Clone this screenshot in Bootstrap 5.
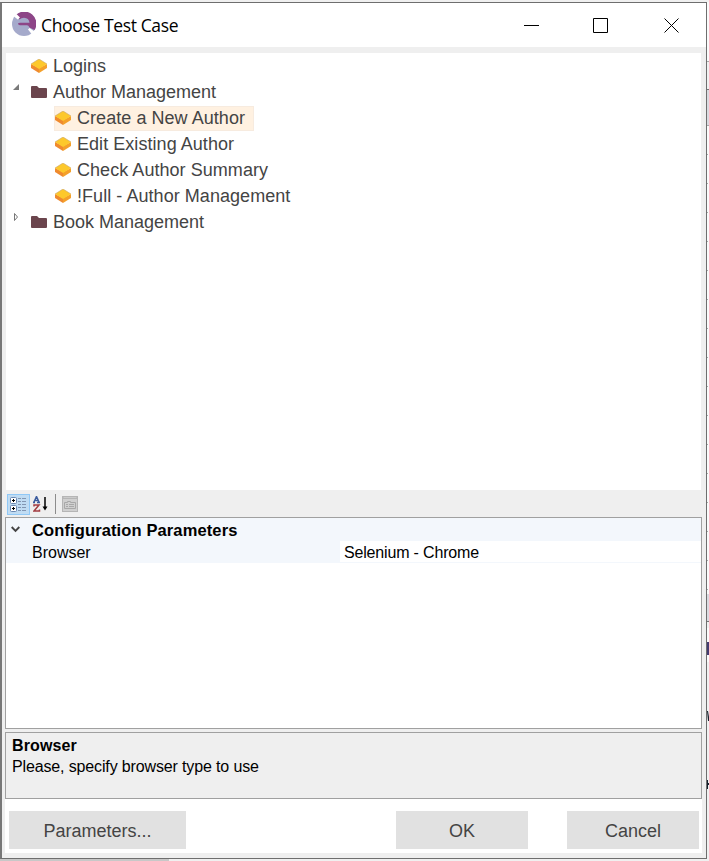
<!DOCTYPE html>
<html lang="en">
<head>
<meta charset="utf-8">
<meta name="viewport" content="width=device-width, initial-scale=1">
<title>Choose Test Case</title>
<link href="https://cdn.jsdelivr.net/npm/bootstrap@5.3.0/dist/css/bootstrap.min.css" rel="stylesheet">
<style>
body{width:709px;height:861px;overflow:hidden;background:#f0f0f0;font-family:"Liberation Sans",Arial,sans-serif;color:#000;line-height:1.2}
svg{display:block;flex:none}
.desktop{height:861px;padding-top:2px;background:linear-gradient(#c8c8c8,#c8c8c8) 0 859px/169px 2px no-repeat,#f0f0f0}
.dialog-window{width:707px;height:857px;border:1px solid #6e6e6e;border-left:2px solid #777;background:#efefef}
.edge{width:2px;height:859px}
.titlebar{height:44px;padding-left:10px;background:#fff}
.titlebar h1{font:400 17.5px/24px "Open Sans","Noto Sans",sans-serif;margin:0 0 1px 5px;letter-spacing:-.37px}
.logo{margin-top:-3px}
.tree{margin:6px 5px 0 4px;height:437px;background:#fff;color:#444}
.tree-row{height:26px;padding-left:25px;font-size:18px;white-space:nowrap}
.tree-row.parent{padding-left:6px}
.tree-row.child{padding-left:49px;letter-spacing:.05px}
.node{height:25px;line-height:25px;padding-right:8px;border:1px solid transparent;margin-left:-1px;display:flex;align-items:center}
.node svg{margin-right:6px}
.node.selected{background:#fff1e1;border-color:#f7ebdf}
.toolstrip{height:27px;padding:1px 0 0 5px}
.tool-on{width:23px;height:21px;background:#c0dcf3;border:1px solid #90c8f6;padding:1px}
.sep{width:1px;height:20px;background:#8c8c8c;margin-left:7px}
.sort-icon{margin-left:3px}
.page-icon{margin-left:6px}
.props{margin:0 4px 0 3px;height:212px;border:1px solid #a0a0a0;background:#fff;font-size:16px}
.prop-head{height:23px;background:#f3f7fc;padding:2px 0 0 5px}
.prop-head b{margin-left:12px;font-size:16.5px;letter-spacing:.12px}
.prop-head svg{margin-top:-3px}
.prop-row{height:22px;background:#f3f7fc;line-height:23px}
.prop-name{width:334px;padding-left:26px}
.prop-value{background:#fff;height:21px;padding-left:4px;flex:1;letter-spacing:-.17px}
.help{margin:3px 4px 0 3px;height:67px;border:1px solid #a0a0a0;padding:2px 6px;font-size:16px;line-height:21px;letter-spacing:-.14px}
.help b{letter-spacing:.12px}
.footer-bar{margin:0 4px 0 3px;height:54px;background:#fff;padding:12px 3px 0 4px}
.dbtn{height:38px;background:#e1e1e1;border:0;border-radius:0;color:#444;font-size:18px;padding:1px 0 0;width:132px;line-height:39px}
.dbtn.wide{width:177px}
.gap-ok{margin-left:210px}.gap-cancel{margin-left:39px}
</style>
</head>
<body>
<svg width="0" height="0" class="position-absolute">
<symbol id="case" viewBox="0 0 16 14"><path d="M0 5v4l8 5V9z" fill="#ef8a2f"/><path d="M16 5v4l-8 5V9z" fill="#f4a02a"/><path d="M8 0l8 5-8 5-8-5z" fill="#fdc82b"/><path d="M0 5l8-5 8 5" fill="none" stroke="#c9a66e" stroke-width=".6"/></symbol>
<symbol id="folder" viewBox="0 0 16 12"><path d="M0 1q0-1 1-1h5l2 2h7q1 0 1 1v8q0 1-1 1H1q-1 0-1-1z" fill="#6b454d"/></symbol>
</svg>
<div class="desktop d-flex">
<main class="dialog-window d-flex flex-column">
<header class="titlebar d-flex align-items-center">
<svg class="logo" width="24" height="24" viewBox="0 0 24 24"><circle cx="12" cy="12" r="12" fill="#a5aacb"/><path d="M4.500 2.500A12 12 0 0 1 22.500 18L17.500 15.500Q16.500 13.200 15 13.200H8Q6 13 6 11.200 6 10.800 8 10.800H17.500Q17 6 12 5.800 9 5.800 7.500 7.500z" fill="#8d4587"/><path d="M2 4.500L4.500 2 8 5.500 5.800 7.500zM16 17.500L17.500 16 22.500 19.500 20 22.500z" fill="#fff"/></svg>
<h1>Choose Test Case</h1>
<svg class="ms-auto" width="184" height="20" viewBox="0 1 184 20" fill="none" stroke="#000"><path d="M2 11.500h15M71.500 4.500h14v14h-14z"/><path d="M142.500 4.500l14 14m0-14l-14 14"/></svg>
</header>
<section class="tree">
<div class="tree-row d-flex align-items-center"><div class="node"><svg width="16" height="14"><use href="#case"/></svg><span>Logins</span></div></div>
<div class="tree-row parent d-flex align-items-center"><svg width="19" height="18"><path d="M7 1v6H1z" fill="#7a7a7a"/></svg><div class="node"><svg width="16" height="12"><use href="#folder"/></svg><span>Author Management</span></div></div>
<div class="tree-row child d-flex align-items-center"><div class="node selected"><svg width="16" height="14"><use href="#case"/></svg><span>Create a New Author</span></div></div>
<div class="tree-row child d-flex align-items-center"><div class="node"><svg width="16" height="14"><use href="#case"/></svg><span>Edit Existing Author</span></div></div>
<div class="tree-row child d-flex align-items-center"><div class="node"><svg width="16" height="14"><use href="#case"/></svg><span>Check Author Summary</span></div></div>
<div class="tree-row child d-flex align-items-center"><div class="node"><svg width="16" height="14"><use href="#case"/></svg><span>!Full - Author Management</span></div></div>
<div class="tree-row parent d-flex align-items-center"><svg width="19" height="18"><path d="M2.500 .5v7l3-3.500z" fill="none" stroke="#777"/></svg><div class="node"><svg width="16" height="12"><use href="#folder"/></svg><span>Book Management</span></div></div>
</section>
<div class="toolstrip d-flex align-items-center">
<div class="tool-on"><svg width="19" height="17" viewBox="0 0 19 17"><g fill="#fff" stroke="#6a87b0"><rect x="1.500" y="1.500" width="6" height="6" rx="1"/><rect x="1.500" y="9.500" width="6" height="6" rx="1"/></g><path d="M3 4.500h3M4.500 3v3M3 12.500h3M4.500 11v3" stroke="#000"/><path d="M9 2.500h3m1 0h4M9 5.500h3m1 0h4M9 8.500h3m1 0h4M9 11.500h3m1 0h4M9 14.500h3m1 0h4" stroke="#8296b2"/></svg></div>
<svg class="sort-icon" width="15" height="16" viewBox="0 0 15 16" fill="none" stroke-width="1.500"><path d="M0 6.500h2M4 6.500h3M1 6l2.500-5.500L6 6M2 4.500h3" stroke="#3c5c9e"/><path d="M1 10.500V9h5L1 15h5.500v-1.500" stroke="#a33d42"/><path d="M12 1v12" stroke="#000"/><path d="M9.500 10.500h5l-2.500 4z" fill="#000"/></svg>
<span class="sep"></span>
<svg class="page-icon" width="16" height="16" viewBox="0 0 16 16"><path d="M0 0h16v16H0z" fill="#b5b5b5"/><path d="M1 3h14v12H1z" fill="#d0d0d0"/><path d="M1.500 1.500h13" stroke="#cbcbcb"/><path d="M2.500 6.500h3v-1h3v1h5v6h-11zM4 8.500h2m1 0h5M4 10.500h2m1 0h5" stroke="#a8a8a8" fill="none"/></svg>
</div>
<section class="props">
<div class="prop-head d-flex align-items-center"><svg width="9" height="7" viewBox="0 0 9 7"><path d="M.7 1l3.800 3.800L8.300 1" fill="none" stroke="#444" stroke-width="1.900"/></svg><b>Configuration Parameters</b></div>
<div class="prop-row d-flex"><span class="prop-name">Browser</span><span class="prop-value">Selenium - Chrome</span></div>
</section>
<section class="help"><b>Browser</b><div>Please, specify browser type to use</div></section>
<footer class="footer-bar d-flex"><button class="btn dbtn wide">Parameters...</button><button class="btn dbtn gap-ok">OK</button><button class="btn dbtn gap-cancel">Cancel</button></footer>
</main>
<svg class="edge" viewBox="0 2 2 859"><path d="M0 2h2v59H0zM0 126h2v468H0zM0 628h2v34H0z" fill="#fafafa"/><path d="M0 90h2v35H0zM0 594h2v27H0z" fill="#dadae0"/><path d="M0 89h2v1H0zM0 621h2v1H0z" fill="#777"/><path d="M0 642h2v13H0z" fill="#443c70"/><path d="M0 711h1l1 6v4H1zM0 783h2v2H0zM0 780h1v9H0z" fill="#18212d"/><path d="M0 61h2v1H0zM0 125h2v1H0zM0 154h1v1H0zM0 183h1v1H0zM0 212h1v1H0zM0 241h1v1H0zM0 270h1v1H0zM0 299h1v1H0zM0 328h1v1H0zM0 357h1v1H0zM0 386h1v1H0zM0 415h1v1H0zM0 444h1v1H0zM0 473h1v1H0zM0 502h1v1H0zM0 531h1v1H0zM0 560h1v1H0zM0 589h1v1H0z" fill="#aaa"/></svg>
</div>
<script src="https://cdn.jsdelivr.net/npm/bootstrap@5.3.0/dist/js/bootstrap.bundle.min.js"></script>
</body>
</html>
